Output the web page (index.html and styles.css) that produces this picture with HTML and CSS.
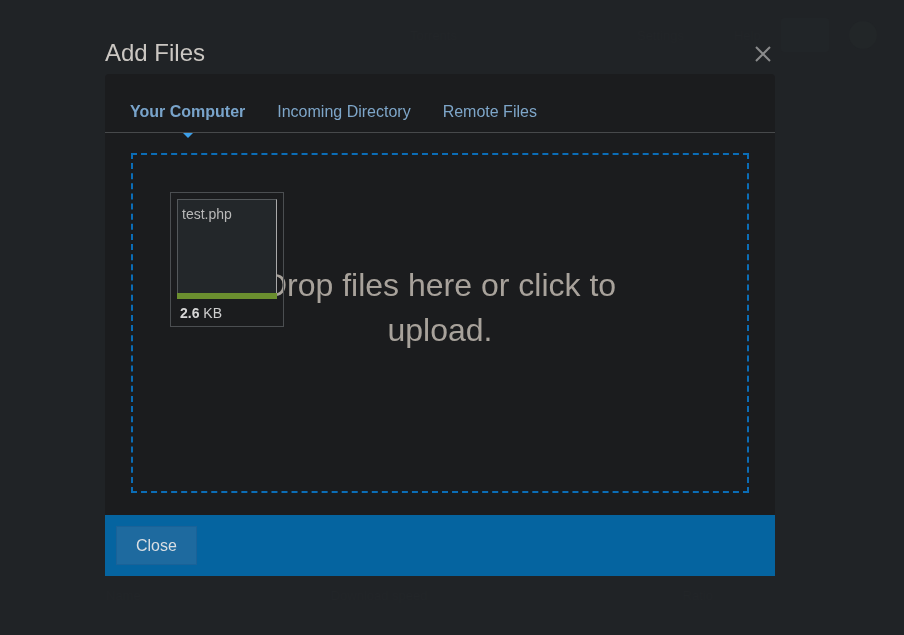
FILE: index.html
```html
<!DOCTYPE html>
<html lang="en">
<head>
<meta charset="utf-8">
<title>Add Files</title>
<link rel="stylesheet" href="styles.css">
</head>
<body>
<div class="page">
  <header class="app-bar">
    <span class="ghost ghost-a">Torrents</span>
    <span class="ghost ghost-b">Settings</span>
    <span class="ghost ghost-c">Help</span>
    <span class="ghost-btn"></span>
    <span class="ghost-avatar"></span>
  </header>
  <div class="app-main"></div>
  <footer class="app-foot">
    <span class="ghost">Name</span>
    <span class="ghost ghost-mid">Download speed</span>
    <span class="ghost ghost-end">Ratio</span>
  </footer>
</div>

<div class="overlay">
  <div class="dialog">
    <div class="dialog-head">
      <h1 class="dialog-title">Add Files</h1>
      <button class="dialog-x" aria-label="Close">
        <svg width="16" height="16" viewBox="0 0 16 16"><path d="M1 1L15 15M15 1L1 15" stroke="#8a8b8c" stroke-width="2" fill="none"/></svg>
      </button>
    </div>
    <div class="dialog-body">
      <nav class="tabs">
        <a class="tab tab-active">Your Computer</a>
        <a class="tab">Incoming Directory</a>
        <a class="tab">Remote Files</a>
      </nav>
      <div class="dropzone">
        <div class="dz-message">Drop files here or click to upload.</div>
        <div class="file-card">
          <div class="file-preview">
            <span class="file-name">test.php</span>
            <span class="file-progress"></span>
          </div>
          <div class="file-size"><strong>2.6</strong> KB</div>
        </div>
      </div>
    </div>
    <div class="dialog-foot">
      <button class="btn-close">Close</button>
    </div>
  </div>
</div>
</body>
</html>
```

FILE: styles.css
```css
* { box-sizing: border-box; }

html, body {
  margin: 0;
  height: 100%;
}

body {
  background: #202326;
  font-family: "Liberation Sans", Arial, sans-serif;
  color: #c9c5c0;
  overflow: hidden;
}

/* faint underlying page */
.page {
  height: 100%;
  display: flex;
  flex-direction: column;
}

.app-bar {
  height: 70px;
  display: flex;
  align-items: center;
  padding: 0 14px 0 410px;
}

.ghost {
  font-size: 13px;
  color: #222528;
}

.ghost-b { margin-left: 180px; }
.ghost-c { margin-left: 50px; }

.ghost-btn {
  width: 48px;
  height: 34px;
  margin-left: 20px;
  border-radius: 3px;
  background: #212528;
}

.ghost-avatar {
  width: 28px;
  height: 28px;
  margin-left: 20px;
  border-radius: 50%;
  background: #222628;
}

.app-main { flex: 1; }

.app-foot {
  height: 60px;
  display: flex;
  align-items: flex-start;
  padding: 13px 0 0 106px;
}

.ghost-mid { margin-left: 190px; }
.ghost-end { margin-left: 255px; }

/* modal */
.overlay {
  position: fixed;
  inset: 0;
  padding: 39px 0 0 105px;
}

.dialog {
  width: 670px;
}

.dialog-head {
  display: flex;
  justify-content: space-between;
  align-items: flex-start;
  margin-bottom: 7px;
}

.dialog-title {
  margin: 0;
  font-size: 24px;
  font-weight: normal;
  line-height: 28px;
  color: #cbc7c2;
}

.dialog-x {
  border: 0;
  background: none;
  padding: 0;
  margin: 7px 4px 0 0;
  width: 16px;
  height: 16px;
  display: block;
}

.dialog-x svg { display: block; }

.dialog-body {
  background: #1b1c1e;
  border-radius: 4px 4px 0 0;
  padding-bottom: 22px;
}

.tabs {
  display: flex;
  gap: 32px;
  padding: 0 25px;
  border-bottom: 1px solid #47494b;
  margin-bottom: 20px;
}

.tab {
  position: relative;
  padding: 28px 0 10px;
  font-size: 16px;
  line-height: 20px;
  color: #7ea6c9;
  cursor: pointer;
}

.tab-active {
  font-weight: bold;
  color: #79a4cb;
}

.tab-active::after {
  content: "";
  position: absolute;
  left: 50%;
  top: calc(100% + 1px);
  margin-left: -5px;
  border-left: 5px solid transparent;
  border-right: 5px solid transparent;
  border-top: 5px solid #3d9fe9;
}

.dropzone {
  position: relative;
  margin: 0 26px;
  height: 340px;
  border: 2px dashed #0b6db6;
  padding-top: 108px;
}

.dz-message {
  max-width: 420px;
  margin: 0 auto;
  text-align: center;
  font-size: 32px;
  line-height: 45px;
  color: #a8a29b;
}

.file-card {
  position: absolute;
  left: 37px;
  top: 37px;
  width: 114px;
  height: 135px;
  border: 1px solid #4b4e51;
  padding: 6px;
}

.file-preview {
  width: 100px;
  height: 100px;
  background: #23272a;
  border: 1px solid #54585b;
  border-right-color: #a9a9a9;
  border-bottom: 0;
  display: flex;
  flex-direction: column;
  justify-content: space-between;
}

.file-name {
  padding: 6px 0 0 4px;
  font-size: 14px;
  line-height: 16px;
  color: #b9b9b9;
}

.file-progress {
  display: block;
  height: 6px;
  margin: 0 -1px;
  background: #6b8f2f;
}

.file-size {
  margin-top: 6px;
  padding-left: 3px;
  font-size: 14px;
  line-height: 16px;
  color: #cfcfcf;
}

.file-size strong { color: #d6d6d6; }

.dialog-foot {
  background: #0564a0;
  padding: 11px;
  height: 61px;
}

.btn-close {
  display: block;
  height: 39px;
  padding: 1px 19px 0;
  border: 1px solid #1a6298;
  background: #1e6a9f;
  color: #d9dee3;
  font-family: "Liberation Sans", Arial, sans-serif;
  font-size: 16px;
  line-height: 36px;
  cursor: pointer;
}
```
